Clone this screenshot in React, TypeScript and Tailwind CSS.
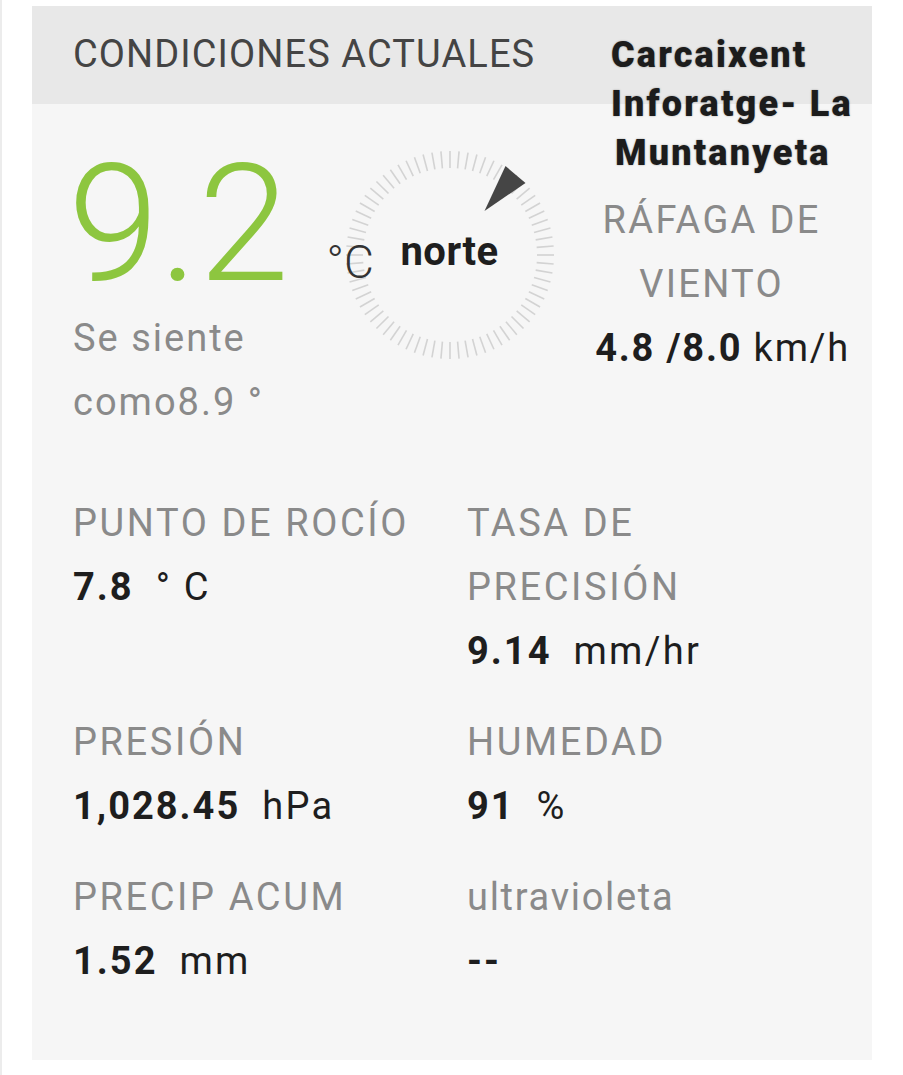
import React from 'react';

interface Stat {
  label: string[];
  value: string;
  unit?: string;
}

const leftStats: Stat[] = [
  { label: ['PUNTO DE ROCÍO'], value: '7.8', unit: '° C' },
  { label: ['PRESIÓN'], value: '1,028.45', unit: 'hPa' },
  { label: ['PRECIP ACUM'], value: '1.52', unit: 'mm' },
];

const rightStats: Stat[] = [
  { label: ['TASA DE', 'PRECISIÓN'], value: '9.14', unit: 'mm/hr' },
  { label: ['HUMEDAD'], value: '91', unit: '%' },
  { label: ['ultravioleta'], value: '--' },
];

function StatBlock({ stat }: { stat: Stat }) {
  return (
    <div className="flex flex-col text-[38px] leading-[64px] tracking-[2px] whitespace-nowrap">
      {stat.label.map((l) => (
        <div
          key={l}
          className={l === l.toUpperCase() ? 'text-[#8a8a8a] tracking-[2.6px]' : 'text-[#8a8a8a] tracking-[1.7px]'}
        >
          {l}
        </div>
      ))}
      <div className="text-[#1e1e1e]">
        <span className="font-bold">{stat.value}</span>
        {stat.unit && <span className="ml-[22px] tracking-[2.3px]">{stat.unit}</span>}
      </div>
    </div>
  );
}

function WindDial() {
  const ticks = Array.from({ length: 72 }, (_, i) => {
    const a = (i * 5 * Math.PI) / 180;
    const s = Math.sin(a);
    const c = Math.cos(a);
    return (
      <line
        key={i}
        x1={105 + s * 87}
        y1={105 - c * 87}
        x2={105 + s * 104}
        y2={105 - c * 104}
        stroke="#d3d3d3"
        strokeWidth="1.6"
      />
    );
  });

  return (
    <div className="relative w-[210px] h-[210px] mt-[46px] ml-[18px]">
      <svg width="210" height="210" viewBox="0 0 210 210">
        {ticks}
        <polygon points="139.5,61 160.5,16 180.5,33" fill="#454545" />
      </svg>
      <span className="absolute left-[-18px] top-[89px] text-[46px] leading-none font-light text-[#333]">
        °C
      </span>
      <div className="absolute inset-0 flex items-center justify-center pb-[6px]">
        <span className="text-[40px] leading-none font-bold tracking-[0.5px] text-[#1e1e1e]">norte</span>
      </div>
    </div>
  );
}

export default function App() {
  return (
    <div className="w-[903px] h-[1075px] bg-white border-l-2 border-[#ececec] pt-[6px] font-['Roboto',sans-serif]">
      <div className="ml-[30px] w-[840px] h-[1054px] bg-[#f6f6f6]">
        <div className="flex h-[98px] bg-[#e8e8e8]">
          <div className="w-[578px] pl-[41px] pt-[16px] text-[38px] leading-[64px] tracking-[1.1px] text-[#444] whitespace-nowrap">
            CONDICIONES ACTUALES
          </div>
          <div className="pl-[1px] pt-[25px] text-[36px] leading-[49px] font-black tracking-[2.2px] text-[#1c1c1c] [text-shadow:0_0_2px_rgba(0,0,0,0.35)] whitespace-nowrap">
            <div>Carcaixent</div>
            <div>Inforatge- La</div>
            <div className="pl-[4px]">Muntanyeta</div>
          </div>
        </div>

        <div className="flex pl-[41px]">
          <div className="w-[257px] pt-[38px]">
            <div className="-ml-[5px] text-[164px] leading-none font-light text-[#8dc63f]">9.2</div>
            <div className="text-[38px] leading-[64px] tracking-[2px] text-[#8a8a8a]">
              <div>Se siente</div>
              <div>como8.9 °</div>
            </div>
          </div>
          <div className="w-[250px]">
            <WindDial />
          </div>
          <div className="flex-1 pt-[84px] pr-[22px] flex flex-col items-center text-[38px] leading-[64px] tracking-[2.3px] whitespace-nowrap">
            <div className="text-[#8a8a8a]">RÁFAGA DE</div>
            <div className="text-[#8a8a8a]">VIENTO</div>
            <div className="pl-[22px] text-[#1e1e1e] tracking-[1.8px]">
              <span className="font-bold">4.8 /8.0</span> km/h
            </div>
          </div>
        </div>

        <div className="grid grid-cols-[394px_1fr] gap-y-[27px] pl-[41px] pt-[57px]">
          {leftStats.map((s, i) => (
            <React.Fragment key={s.value}>
              <StatBlock stat={s} />
              <StatBlock stat={rightStats[i]} />
            </React.Fragment>
          ))}
        </div>
      </div>
    </div>
  );
}
